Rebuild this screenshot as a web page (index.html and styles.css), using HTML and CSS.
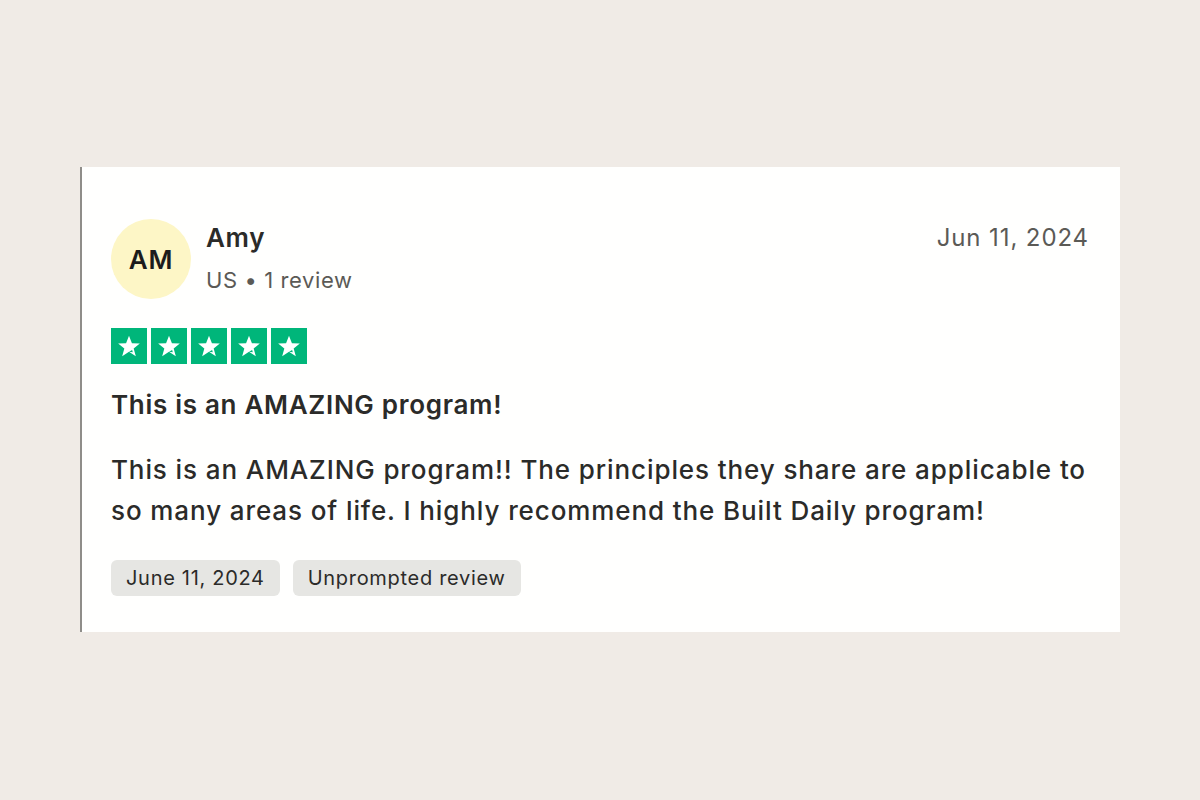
FILE: index.html
```html
<!DOCTYPE html>
<html lang="en">
<head>
  <meta charset="UTF-8">
  <title>Review</title>
  <link rel="stylesheet" href="styles.css">
</head>
<body>
  <div class="card">
    <div class="card-head">
      <div class="avatar">AM</div>
      <div class="who">
        <div class="name">Amy</div>
        <div class="meta">US &bull; 1 review</div>
      </div>
      <div class="date">Jun 11, 2024</div>
    </div>

    <div class="stars">
      <span class="star"><svg viewBox="0 0 24 24"><path d="M12 2.5l2.7 6.9 7.3.3-5.7 4.6 2 7.2L12 17.4l-6.3 4.1 2-7.2L2 9.7l7.3-.3z"/><path class="notch" d="M14.9 15.7l.6 2.1L12 17.4z"/></svg></span>
      <span class="star"><svg viewBox="0 0 24 24"><path d="M12 2.5l2.7 6.9 7.3.3-5.7 4.6 2 7.2L12 17.4l-6.3 4.1 2-7.2L2 9.7l7.3-.3z"/><path class="notch" d="M14.9 15.7l.6 2.1L12 17.4z"/></svg></span>
      <span class="star"><svg viewBox="0 0 24 24"><path d="M12 2.5l2.7 6.9 7.3.3-5.7 4.6 2 7.2L12 17.4l-6.3 4.1 2-7.2L2 9.7l7.3-.3z"/><path class="notch" d="M14.9 15.7l.6 2.1L12 17.4z"/></svg></span>
      <span class="star"><svg viewBox="0 0 24 24"><path d="M12 2.5l2.7 6.9 7.3.3-5.7 4.6 2 7.2L12 17.4l-6.3 4.1 2-7.2L2 9.7l7.3-.3z"/><path class="notch" d="M14.9 15.7l.6 2.1L12 17.4z"/></svg></span>
      <span class="star"><svg viewBox="0 0 24 24"><path d="M12 2.5l2.7 6.9 7.3.3-5.7 4.6 2 7.2L12 17.4l-6.3 4.1 2-7.2L2 9.7l7.3-.3z"/><path class="notch" d="M14.9 15.7l.6 2.1L12 17.4z"/></svg></span>
    </div>

    <h2 class="title">This is an AMAZING program!</h2>
    <p class="text">This is an AMAZING program!! The principles they share are applicable to so many areas of life. I highly recommend the Built Daily program!</p>

    <div class="tags">
      <span class="tag">June 11, 2024</span>
      <span class="tag">Unprompted review</span>
    </div>
  </div>
</body>
</html>
```

FILE: styles.css
```css
body {
  margin: 0;
  background-color: #f0ebe6;
  font-family: Inter, 'Noto Sans', sans-serif;
  color: #2b2b29;
  padding-top: 167px;
}

.card {
  box-sizing: border-box;
  width: 1040px;
  height: 465px;
  margin-left: 80px;
  background: #fffffe;
  border-left: 2px solid #8f8d89;
  padding: 52px 31px 36px 29px;
}

.card-head {
  display: flex;
  align-items: flex-start;
}

.avatar {
  width: 80px;
  height: 80px;
  border-radius: 50%;
  background-color: #fdf6c6;
  display: flex;
  align-items: center;
  justify-content: center;
  font-weight: 600;
  font-size: 26px;
  letter-spacing: 0.8px;
  color: #1c1c1c;
  flex-shrink: 0;
}

.who {
  margin-left: 15px;
  flex: 1;
}

.name {
  font-size: 26px;
  font-weight: 600;
  letter-spacing: 0.7px;
  margin-top: 4px;
  line-height: 30px;
}

.meta {
  font-size: 22px;
  letter-spacing: 0.6px;
  color: #5b5a56;
  margin-top: 13px;
  line-height: 28px;
}

.date {
  font-size: 24px;
  letter-spacing: 0.9px;
  color: #5b5a56;
  margin-top: 4px;
  line-height: 30px;
}

.stars {
  display: flex;
  gap: 4px;
  margin-top: 29px;
}

.star {
  width: 36px;
  height: 36px;
  background-color: #00b67a;
  display: flex;
  align-items: center;
  justify-content: center;
}

.star svg {
  width: 26px;
  height: 26px;
  fill: #ffffff;
}

.star .notch {
  fill: #00b67a;
}

.title {
  font-size: 26px;
  font-weight: 600;
  letter-spacing: 0.7px;
  margin: 26px 0 0;
  line-height: 30px;
}

.text {
  font-size: 26px;
  font-weight: 500;
  letter-spacing: 0.9px;
  line-height: 41px;
  margin: 29px 0 0;
  width: 990px;
}

.tags {
  display: flex;
  gap: 13px;
  margin-top: 29px;
}

.tag {
  background-color: #e6e6e3;
  border-radius: 6px;
  font-size: 20px;
  letter-spacing: 0.7px;
  padding: 0 15px;
  line-height: 36px;
  height: 36px;
}
```
